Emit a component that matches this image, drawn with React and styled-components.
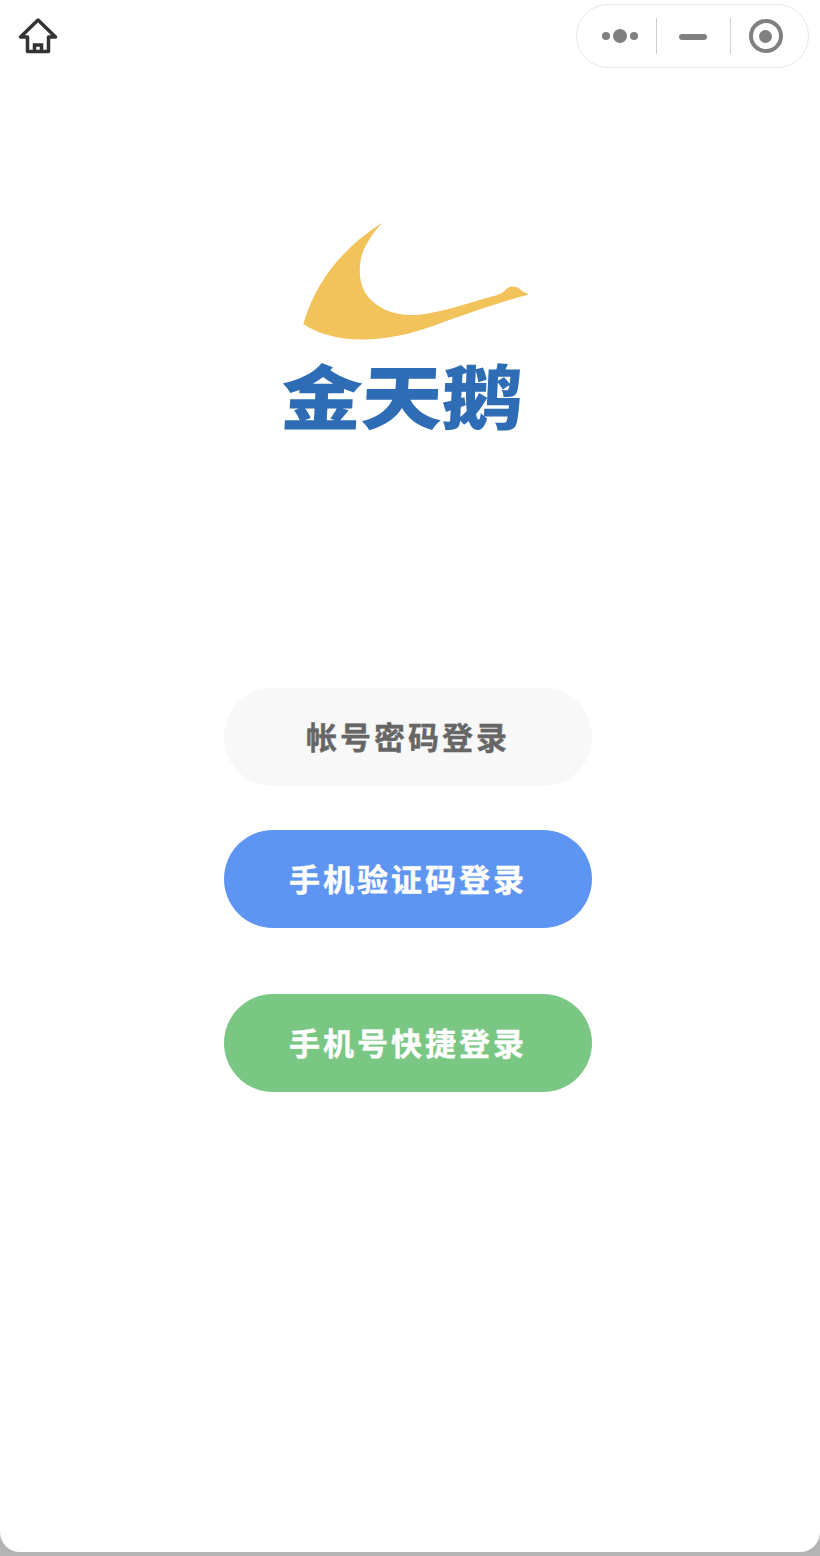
import React from "react";
import styled, { createGlobalStyle } from "styled-components";

const Global = createGlobalStyle`
  html, body { margin: 0; padding: 0; background: #b0b0b0; }
  body { font-family: "Noto Sans CJK SC", "Liberation Sans", sans-serif; }
`;

const Frame = styled.div`
  width: 820px;
  height: 1556px;
  overflow: hidden;
  background: linear-gradient(#8e8e8e, #b4b4b4);
`;

const Sheet = styled.main`
  height: 1552px;
  background: #fff;
  border-radius: 0 0 20px 20px;
  display: flex;
  flex-direction: column;
  overflow: hidden;
`;

const TopBar = styled.header`
  height: 64px;
  padding: 4px 11px 0 18px;
  display: flex;
  align-items: flex-start;
  justify-content: space-between;
  flex: none;
`;

const HomeIcon = styled.svg`
  width: 40px;
  height: 38px;
  margin-top: 13px;
  flex: none;
`;

const Capsule = styled.div`
  width: 233px;
  height: 64px;
  box-sizing: border-box;
  border: 1px solid #e8e8e8;
  border-radius: 32px;
  display: grid;
  grid-template-columns: 79px 1px 73px 1px 1fr;
  align-items: center;
  justify-items: center;
`;

const Divider = styled.span`
  width: 1px;
  height: 36px;
  background: #cfcfcf;
`;

const Dots = styled.span`
  display: flex;
  align-items: center;
  gap: 3px;
  margin-left: 6px;
`;

const Dot = styled.span`
  width: ${(p) => p.$size}px;
  height: ${(p) => p.$size}px;
  border-radius: 50%;
  background: #808080;
`;

const Dash = styled.span`
  width: 28px;
  height: 6px;
  border-radius: 3px;
  background: #808080;
  margin: 2px 1px 0 0;
`;

const Target = styled.span`
  width: 34px;
  height: 34px;
  box-sizing: border-box;
  border: 4px solid #808080;
  border-radius: 50%;
  display: flex;
  align-items: center;
  justify-content: center;
  margin-right: 8px;
  &::after {
    content: "";
    width: 13px;
    height: 13px;
    border-radius: 50%;
    background: #808080;
  }
`;

const Logo = styled.section`
  margin: 154px 0 0 284px;
  width: 246px;
  display: flex;
  flex-direction: column;
  flex: none;
`;

const Swoosh = styled.svg`
  width: 246px;
  height: 118px;
  display: block;
`;

const Brand = styled.div`
  margin-top: 14px;
  height: 78px;
  width: 246px;
  font-size: 80px;
  line-height: 78px;
  font-weight: 900;
  letter-spacing: -1px;
  color: #2e6db5;
  white-space: nowrap;
  transform: translate(-3px, 0) skewX(-3deg) scale(1.02, 0.88);
  transform-origin: left center;
`;

const Actions = styled.nav`
  margin: 256px 0 0 224px;
  width: 368px;
  display: flex;
  flex-direction: column;
  flex: none;
`;

const LoginButton = styled.button`
  width: 368px;
  height: 98px;
  border: 0;
  padding: 0 0 4px;
  margin-top: ${(p) => p.$gap}px;
  border-radius: 49px;
  background: ${(p) => p.$bg};
  color: ${(p) => p.$fg};
  font-family: inherit;
  font-size: 31px;
  font-weight: 700;
  letter-spacing: 3px;
  -webkit-text-stroke: 0.4px ${(p) => p.$fg};
`;

export default function App() {
  return (
    <Frame>
      <Global />
      <Sheet>
        <TopBar>
          <HomeIcon viewBox="18 17 40 38" fill="none" stroke="#333" strokeWidth="3.5">
            <path d="M27.5 37H20.5L38 20L55.5 37H48.5V51.5H27.5Z" strokeLinejoin="round" />
            <path d="M34.5 51.5V45H41.5V51.5" />
          </HomeIcon>
          <Capsule>
            <Dots>
              <Dot $size={8} />
              <Dot $size={14} />
              <Dot $size={8} />
            </Dots>
            <Divider />
            <Dash />
            <Divider />
            <Target />
          </Capsule>
        </TopBar>
        <Logo>
          <Swoosh viewBox="284 222 246 118">
            <path
              fill="#f2c35b"
              d="M382.5 222.5C345 246 316 280 303.3 324C318 334 340 340 364 339.5C395 339 420 331 445 321.5C472 312 500 302 529 294.5L522 291C517 285.5 509 285 505 290.5C502 294 497 295 490 297C465 304 440 313 416 315C392 316 375 307 366 294C358 281 358 263 364 249C369 239 375 230 382.5 222.5Z"
            />
          </Swoosh>
          <Brand>金天鹅</Brand>
        </Logo>
        <Actions>
          <LoginButton $gap={0} $bg="#f8f8f8" $fg="#666">帐号密码登录</LoginButton>
          <LoginButton $gap={44} $bg="#5e95f2" $fg="#fff">手机验证码登录</LoginButton>
          <LoginButton $gap={66} $bg="#7ac683" $fg="#fff">手机号快捷登录</LoginButton>
        </Actions>
      </Sheet>
    </Frame>
  );
}
